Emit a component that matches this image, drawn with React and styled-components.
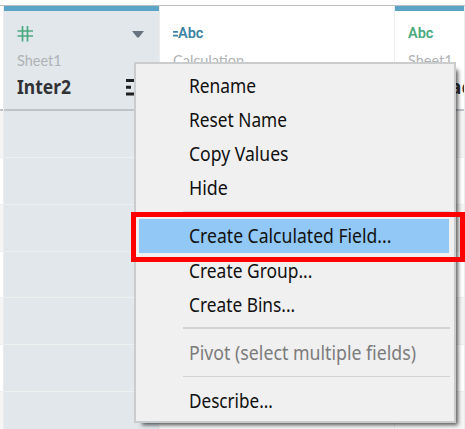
import React from "react";
import styled, { createGlobalStyle } from "styled-components";

const Global = createGlobalStyle`
  * { box-sizing: border-box; }
  body { margin: 0; background: #fff; overflow: hidden; }
`;

const Screen = styled.main`
  position: relative;
  width: 465px;
  height: 429px;
  overflow: hidden;
  padding-top: 5px;
  background: #fff;
`;

const Table = styled.section`
  display: grid;
  grid-template-columns: 4px 156px 235px 70px;
  height: 424px;
  border-top: 1px solid #bcbfc1;
`;

const Column = styled.div`
  display: flex;
  flex-direction: column;
  background: ${(p) => (p.$selected ? "#e1e7eb" : "#fff")};
  border-right: 1px solid #ececec;
  overflow: hidden;
`;

const Header = styled.header`
  display: flex;
  flex-direction: column;
  flex: none;
  height: 105px;
  padding: ${(p) => (p.$source ? "14px" : "19px")} 15px 0 13px;
  border-top: ${(p) => (p.$source ? "5px solid #5ba3c7" : "0")};
  border-bottom: 2px solid #c0c4c7;
  font-family: "Lato", sans-serif;
  white-space: nowrap;
`;

const TypeRow = styled.div`
  display: flex;
  align-items: center;
  justify-content: space-between;
  height: 18px;
`;

const TypeLabel = styled.span`
  display: flex;
  align-items: center;
  color: ${(p) => (p.$calculated ? "#3b83a3" : "#4caa80")};
  font: 600 14.5px/18px "Roboto", sans-serif;
`;

const Source = styled.div`
  margin-top: 8px;
  height: 20px;
  color: #b0b3b5;
  font-size: 14.5px;
  line-height: 20px;
`;

const NameRow = styled.div`
  display: flex;
  align-items: center;
  margin-top: 4px;
  height: 24px;
  padding-left: ${(p) => p.$indent || 0}px;
  color: #303235;
  font: 700 19px/24px "Noto Sans", sans-serif;
`;

const Name = styled.span`
  width: 109px;
  transform: scaleX(0.92);
  transform-origin: left;
`;

const Cell = styled.div`
  flex: none;
  height: 46.85px;
  border-bottom: 1.6px solid #eeefef;
  background: ${(p) => (p.$selected ? "#e1e7eb" : p.$odd ? "#fff" : "#f5f5f5")};
`;

const Menu = styled.nav`
  position: absolute;
  left: 134px;
  top: 62px;
  width: 322px;
  height: 361px;
  padding: 4px 5px;
  border: 2px solid #cacccd;
  background: #f0f0f0;
  box-shadow: 5px 5px 4px -3px rgba(0, 0, 0, 0.65);
`;

const Item = styled.div`
  display: flex;
  align-items: center;
  width: 310px;
  height: 34.2px;
  margin-left: -2px;
  padding: 1px 0 0 50px;
  background: ${(p) => (p.$active ? "#91c8f6" : "transparent")};
  color: ${(p) => (p.$disabled ? "#7c7c7c" : "#111")};
  font: 400 19px/30px "Noto Sans", sans-serif;
  white-space: nowrap;
`;

const Label = styled.span`
  transform: scaleX(${(p) => p.$stretch});
  transform-origin: left;
`;

const Divider = styled.div`
  height: 14px;
  margin-left: 42px;
  padding-top: 6px;
  width: 267px;

  &::before {
    content: "";
    display: block;
    height: 1.5px;
    background: #d3d3d3;
  }
`;

const Highlight = styled.div`
  position: absolute;
  left: 131px;
  top: 212px;
  width: 334px;
  height: 50px;
  border: 5px solid #fe0000;
`;

const NumberIcon = () => (
  <svg width="17" height="17" viewBox="0 0 17 17" fill="none" stroke="#4caa80" strokeWidth="1.7">
    <path d="M5.5 0v15.5M10.5 0v15.5M.5 5h15.5M.5 10h15.5" />
  </svg>
);

const Caret = () => (
  <svg width="12" height="7" viewBox="0 0 12 7">
    <path d="M0 0h12L6.8 6.5H5.2z" fill="#67737e" />
  </svg>
);

const SortIcon = () => (
  <svg width="16" height="17" viewBox="0 0 16 17" fill="#1d1f21">
    <path d="M0 0h14v3H0zM0 6.7h5v3H0zM0 13.5h10v3H0z" />
  </svg>
);

const EqualsIcon = () => (
  <svg width="5" height="6" viewBox="0 0 5 6" fill="#3b83a3">
    <path d="M0 0h5v1.7H0zM0 3.7h5v1.7H0z" />
  </svg>
);

const rows = [0, 1, 2, 3, 4, 5, 6];
const Cells = ({ selected }) => rows.map((r) => <Cell key={r} $odd={r % 2} $selected={selected} />);

const menu = [
  { text: "Rename", stretch: 0.915 },
  { text: "Reset Name", stretch: 0.91 },
  { text: "Copy Values", stretch: 0.925 },
  { text: "Hide", stretch: 0.94 },
  null,
  { text: "Create Calculated Field...", active: true, stretch: 0.925 },
  { text: "Create Group...", stretch: 0.915 },
  { text: "Create Bins...", stretch: 0.91 },
  null,
  { text: "Pivot (select multiple fields)", disabled: true, stretch: 0.933 },
  null,
  { text: "Describe...", stretch: 0.9 },
];

export default function App() {
  return (
    <Screen>
      <Global />
      <Table>
        <Column>
          <Header />
          <Cells />
        </Column>
        <Column $selected>
          <Header $source>
            <TypeRow>
              <NumberIcon />
              <Caret />
            </TypeRow>
            <Source>Sheet1</Source>
            <NameRow>
              <Name>Inter2</Name>
              <SortIcon />
            </NameRow>
          </Header>
          <Cells selected />
        </Column>
        <Column>
          <Header>
            <TypeRow>
              <TypeLabel $calculated><EqualsIcon />Abc</TypeLabel>
            </TypeRow>
            <Source>Calculation</Source>
          </Header>
          <Cells />
        </Column>
        <Column>
          <Header $source>
            <TypeRow>
              <TypeLabel>Abc</TypeLabel>
            </TypeRow>
            <Source>Sheet1</Source>
            <NameRow $indent={42}>ac</NameRow>
          </Header>
          <Cells />
        </Column>
      </Table>
      <Menu>
        {menu.map((entry, i) =>
          entry ? (
            <Item key={entry.text} $active={entry.active} $disabled={entry.disabled}>
              <Label $stretch={entry.stretch}>{entry.text}</Label>
            </Item>
          ) : (
            <Divider key={i} />
          )
        )}
      </Menu>
      <Highlight />
    </Screen>
  );
}
